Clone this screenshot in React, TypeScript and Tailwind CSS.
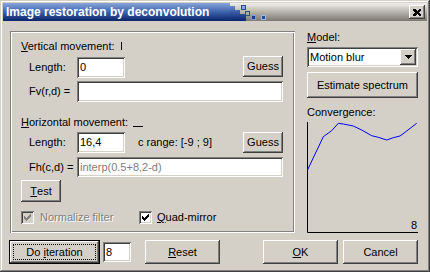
import React from 'react'

// win2000 bevels
const raised =
  'shadow-[inset_-1px_-1px_#404040,inset_1px_1px_#ffffff,inset_-2px_-2px_#808080,inset_2px_2px_#d4d0c8]'
const sunken =
  'shadow-[inset_1px_1px_#808080,inset_-1px_-1px_#ffffff,inset_2px_2px_#404040,inset_-2px_-2px_#d4d0c8]'
const etched =
  'shadow-[inset_1px_1px_#808080,inset_-1px_-1px_#ffffff,inset_2px_2px_#ffffff,inset_-2px_-2px_#808080]'

const checkBits = [
  '......X',
  '.....XX',
  'X...XXX',
  'XX.XXX.',
  'XXXXX..',
  '.XXX...',
  '..X....',
]

function Button({ children, className = '' }: { children: React.ReactNode; className?: string }) {
  return (
    <div className={`flex items-center justify-center bg-[#d4d0c8] ${raised} ${className}`}>{children}</div>
  )
}

function Edit({ value, className = '', muted = false }: { value: string; className?: string; muted?: boolean }) {
  return (
    <div className={`flex items-center bg-white pl-[3px] ${sunken} ${className}`}>
      <span className={muted ? 'text-[#808080]' : 'text-black'}>{value}</span>
    </div>
  )
}

function CheckBox({ disabled = false }: { disabled?: boolean }) {
  return (
    <div
      className={`w-[13px] h-[13px] shrink-0 flex items-center justify-center ${sunken} ${
        disabled ? 'bg-[#d4d0c8]' : 'bg-white'
      }`}
    >
      <svg width="7" height="7" viewBox="0 0 7 7" shapeRendering="crispEdges">
        {checkBits.map((row, y) =>
          row.split('').map((c, x) =>
            c === 'X' ? (
              <rect key={`${x}-${y}`} x={x} y={y} width="1" height="1" fill={disabled ? '#808080' : '#000000'} />
            ) : null,
          ),
        )}
      </svg>
    </div>
  )
}

function TitleBar() {
  return (
    <div className="h-[18px] flex shrink-0 bg-gradient-to-b from-[#f2f0ec] to-[#7e7a72]">
      <div className="w-[227px] flex items-center pl-[3px] bg-gradient-to-b from-[#8aa4d8] via-[#3e62ac] to-[#0a246a]">
        <span className="text-white font-bold text-[12px] leading-[18px] whitespace-nowrap">
          Image restoration by deconvolution
        </span>
      </div>
      <svg width="40" height="18" viewBox="0 0 40 18" shapeRendering="crispEdges">
        <defs>
          <linearGradient id="tb" x1="0" y1="0" x2="0" y2="18" gradientUnits="userSpaceOnUse">
            <stop offset="0" stopColor="#8aa4d8" />
            <stop offset="0.45" stopColor="#3e62ac" />
            <stop offset="1" stopColor="#0a246a" />
          </linearGradient>
        </defs>
        <rect x="0" y="3" width="5" height="4" fill="url(#tb)" />
        <rect x="0" y="7" width="10" height="4" fill="url(#tb)" />
        <rect x="0" y="11" width="16" height="7" fill="url(#tb)" />
        <rect x="11.5" y="2.5" width="4" height="4" fill="#86a6dc" stroke="#2c4c94" />
        <rect x="15.5" y="8.5" width="4" height="4" fill="none" stroke="#2c4c94" />
        <rect x="21.5" y="12.5" width="4" height="4" fill="#1e3c8c" stroke="#7c9cd4" />
        <rect x="31.5" y="12.5" width="4" height="4" fill="#2a4c9c" stroke="#9cb8e4" />
      </svg>
      <div className="flex-1" />
      <div className={`w-[16px] h-[14px] mt-[2px] mr-[2px] flex items-center justify-center bg-[#d4d0c8] ${raised}`}>
        <svg width="8" height="7" viewBox="0 0 8 7" shapeRendering="crispEdges">
          <path d="M0 0h2l2 2l2-2h2v1l-2 2.5l2 2.5v1h-2l-2-2l-2 2h-2v-1l2-2.5l-2-2.5z" fill="#000" />
        </svg>
      </div>
    </div>
  )
}

function Chart() {
  const pts: [number, number][] = [
    [0.5, 48], [16.3, 14.7], [24.7, 8.7], [31.3, 1.3], [36.3, 2], [46.3, 4], [54.7, 8],
    [64.7, 13.7], [71.3, 15.3], [79.7, 18], [86.3, 15.7], [93, 14], [98, 10.3], [109.7, 1.3],
  ]
  return (
    <div className="relative mt-[3px] h-[111px] w-[111px]">
      <svg width="111" height="111" viewBox="0 0 111 111">
        <path d="M0.5 0V110.5H111" fill="none" stroke="#000" strokeWidth="1" />
        <polyline points={pts.map((p) => p.join(',')).join(' ')} fill="none" stroke="#0000ff" strokeWidth="1" />
      </svg>
      <span className="absolute right-[1px] bottom-[1px]">8</span>
    </div>
  )
}

export default function App() {
  return (
    <div
      className={`w-[430px] h-[272px] bg-[#d4d0c8] p-[3px] flex flex-col text-[11px] leading-[13px] text-black font-['Liberation_Sans',Arial,sans-serif] shadow-[inset_-1px_-1px_#404040,inset_1px_1px_#d4d0c8,inset_-2px_-2px_#808080,inset_2px_2px_#ffffff]`}
    >
      <TitleBar />

      <div className="flex mt-[10px]">
        {/* left group */}
        <div className={`ml-[7px] w-[285px] h-[202px] flex flex-col pt-[9px] pl-[11px] pr-[12px] ${etched}`}>
          <div className="flex h-[13px]">
            <span className="w-[100px] whitespace-nowrap">
              <span className="underline">V</span>ertical movement:
            </span>
            <div className="w-px h-[8px] mt-[2px] bg-black" />
          </div>

          <div className="flex h-[22px] mt-[3px] ml-[8px]">
            <span className="w-[48px] self-center">Length:</span>
            <Edit value="0" className="w-[48px] h-[21px] mt-px" />
            <div className="flex-1" />
            <Button className="w-[40px] h-[21px]">Guess</Button>
          </div>

          <div className="flex h-[21px] mt-[3px] ml-[8px] items-center">
            <span className="w-[48px] whitespace-nowrap">Fv(r,d) =</span>
            <Edit value="" className="flex-1 h-[21px]" />
          </div>

          <div className="flex h-[13px] mt-[14px]">
            <span className="w-[112px] whitespace-nowrap">
              <span className="underline">H</span>orizontal movement:
            </span>
            <div className="w-[10px] h-px mt-[10px] bg-black" />
          </div>

          <div className="flex h-[21px] mt-[3px] ml-[8px] items-center">
            <span className="w-[48px]">Length:</span>
            <Edit value="16,4" className="w-[48px] h-[21px]" />
            <span className="ml-[13px] whitespace-nowrap">c range: [-9 ; 9]</span>
            <div className="flex-1" />
            <Button className="w-[40px] h-[21px]">Guess</Button>
          </div>

          <div className="flex h-[20px] mt-[4px] ml-[8px] items-center">
            <span className="w-[48px] whitespace-nowrap">Fh(c,d) =</span>
            <Edit value="interp(0.5+8,2-d)" muted className="flex-1 h-[20px]" />
          </div>

          <div className="flex mt-[3px]">
            <Button className="w-[40px] h-[22px]">
              <span className="underline">T</span>est
            </Button>
          </div>

          <div className="flex h-[13px] mt-[9px] items-center">
            <div className="w-[118px] flex items-center gap-[6px]">
              <CheckBox disabled />
              <span className="text-[#808080] whitespace-nowrap [text-shadow:1px_1px_0_#ffffff]">Normalize filter</span>
            </div>
            <div className="flex items-center gap-[5px]">
              <CheckBox />
              <span className="whitespace-nowrap">
                <span className="underline">Q</span>uad-mirror
              </span>
            </div>
          </div>
        </div>

        {/* right column */}
        <div className="ml-[12px] w-[111px] flex flex-col">
          <span className="h-[13px]">
            <span className="underline">M</span>odel:
          </span>
          <div className={`mt-[3px] h-[20px] flex bg-white ${sunken}`}>
            <span className="flex-1 pl-[3px] self-center">Motion blur</span>
            <div className={`w-[16px] my-[2px] mr-[2px] flex items-center justify-center bg-[#d4d0c8] ${raised}`}>
              <svg width="7" height="4" viewBox="0 0 7 4" shapeRendering="crispEdges">
                <path d="M0 0h7v1h-1v1h-1v1h-1v1h-1v-1h-1v-1h-1v-1h-1z" fill="#000" />
              </svg>
            </div>
          </div>
          <Button className="mt-[5px] h-[26px]">Estimate spectrum</Button>
          <span className="mt-[8px] h-[13px]">Convergence:</span>
          <Chart />
        </div>
      </div>

      {/* bottom buttons */}
      <div className="flex items-start mt-[7px] ml-[6px]">
        <div className={`w-[91px] h-[24px] border border-black p-[3px] flex bg-[#d4d0c8] ${raised}`}>
          <div className="flex-1 border border-dotted border-black flex items-center justify-center whitespace-pre">
            Do <span className="underline">i</span>teration
          </div>
        </div>
        <Edit value="8" className="ml-[3px] mt-[2px] w-[28px] h-[20px]" />
        <Button className="ml-[14px] w-[75px] h-[24px]">
          <span className="underline">R</span>eset
        </Button>
        <Button className="ml-[43px] w-[75px] h-[24px]">
          <span className="underline">O</span>K
        </Button>
        <Button className="ml-[5px] w-[75px] h-[24px]">Cancel</Button>
      </div>
    </div>
  )
}
